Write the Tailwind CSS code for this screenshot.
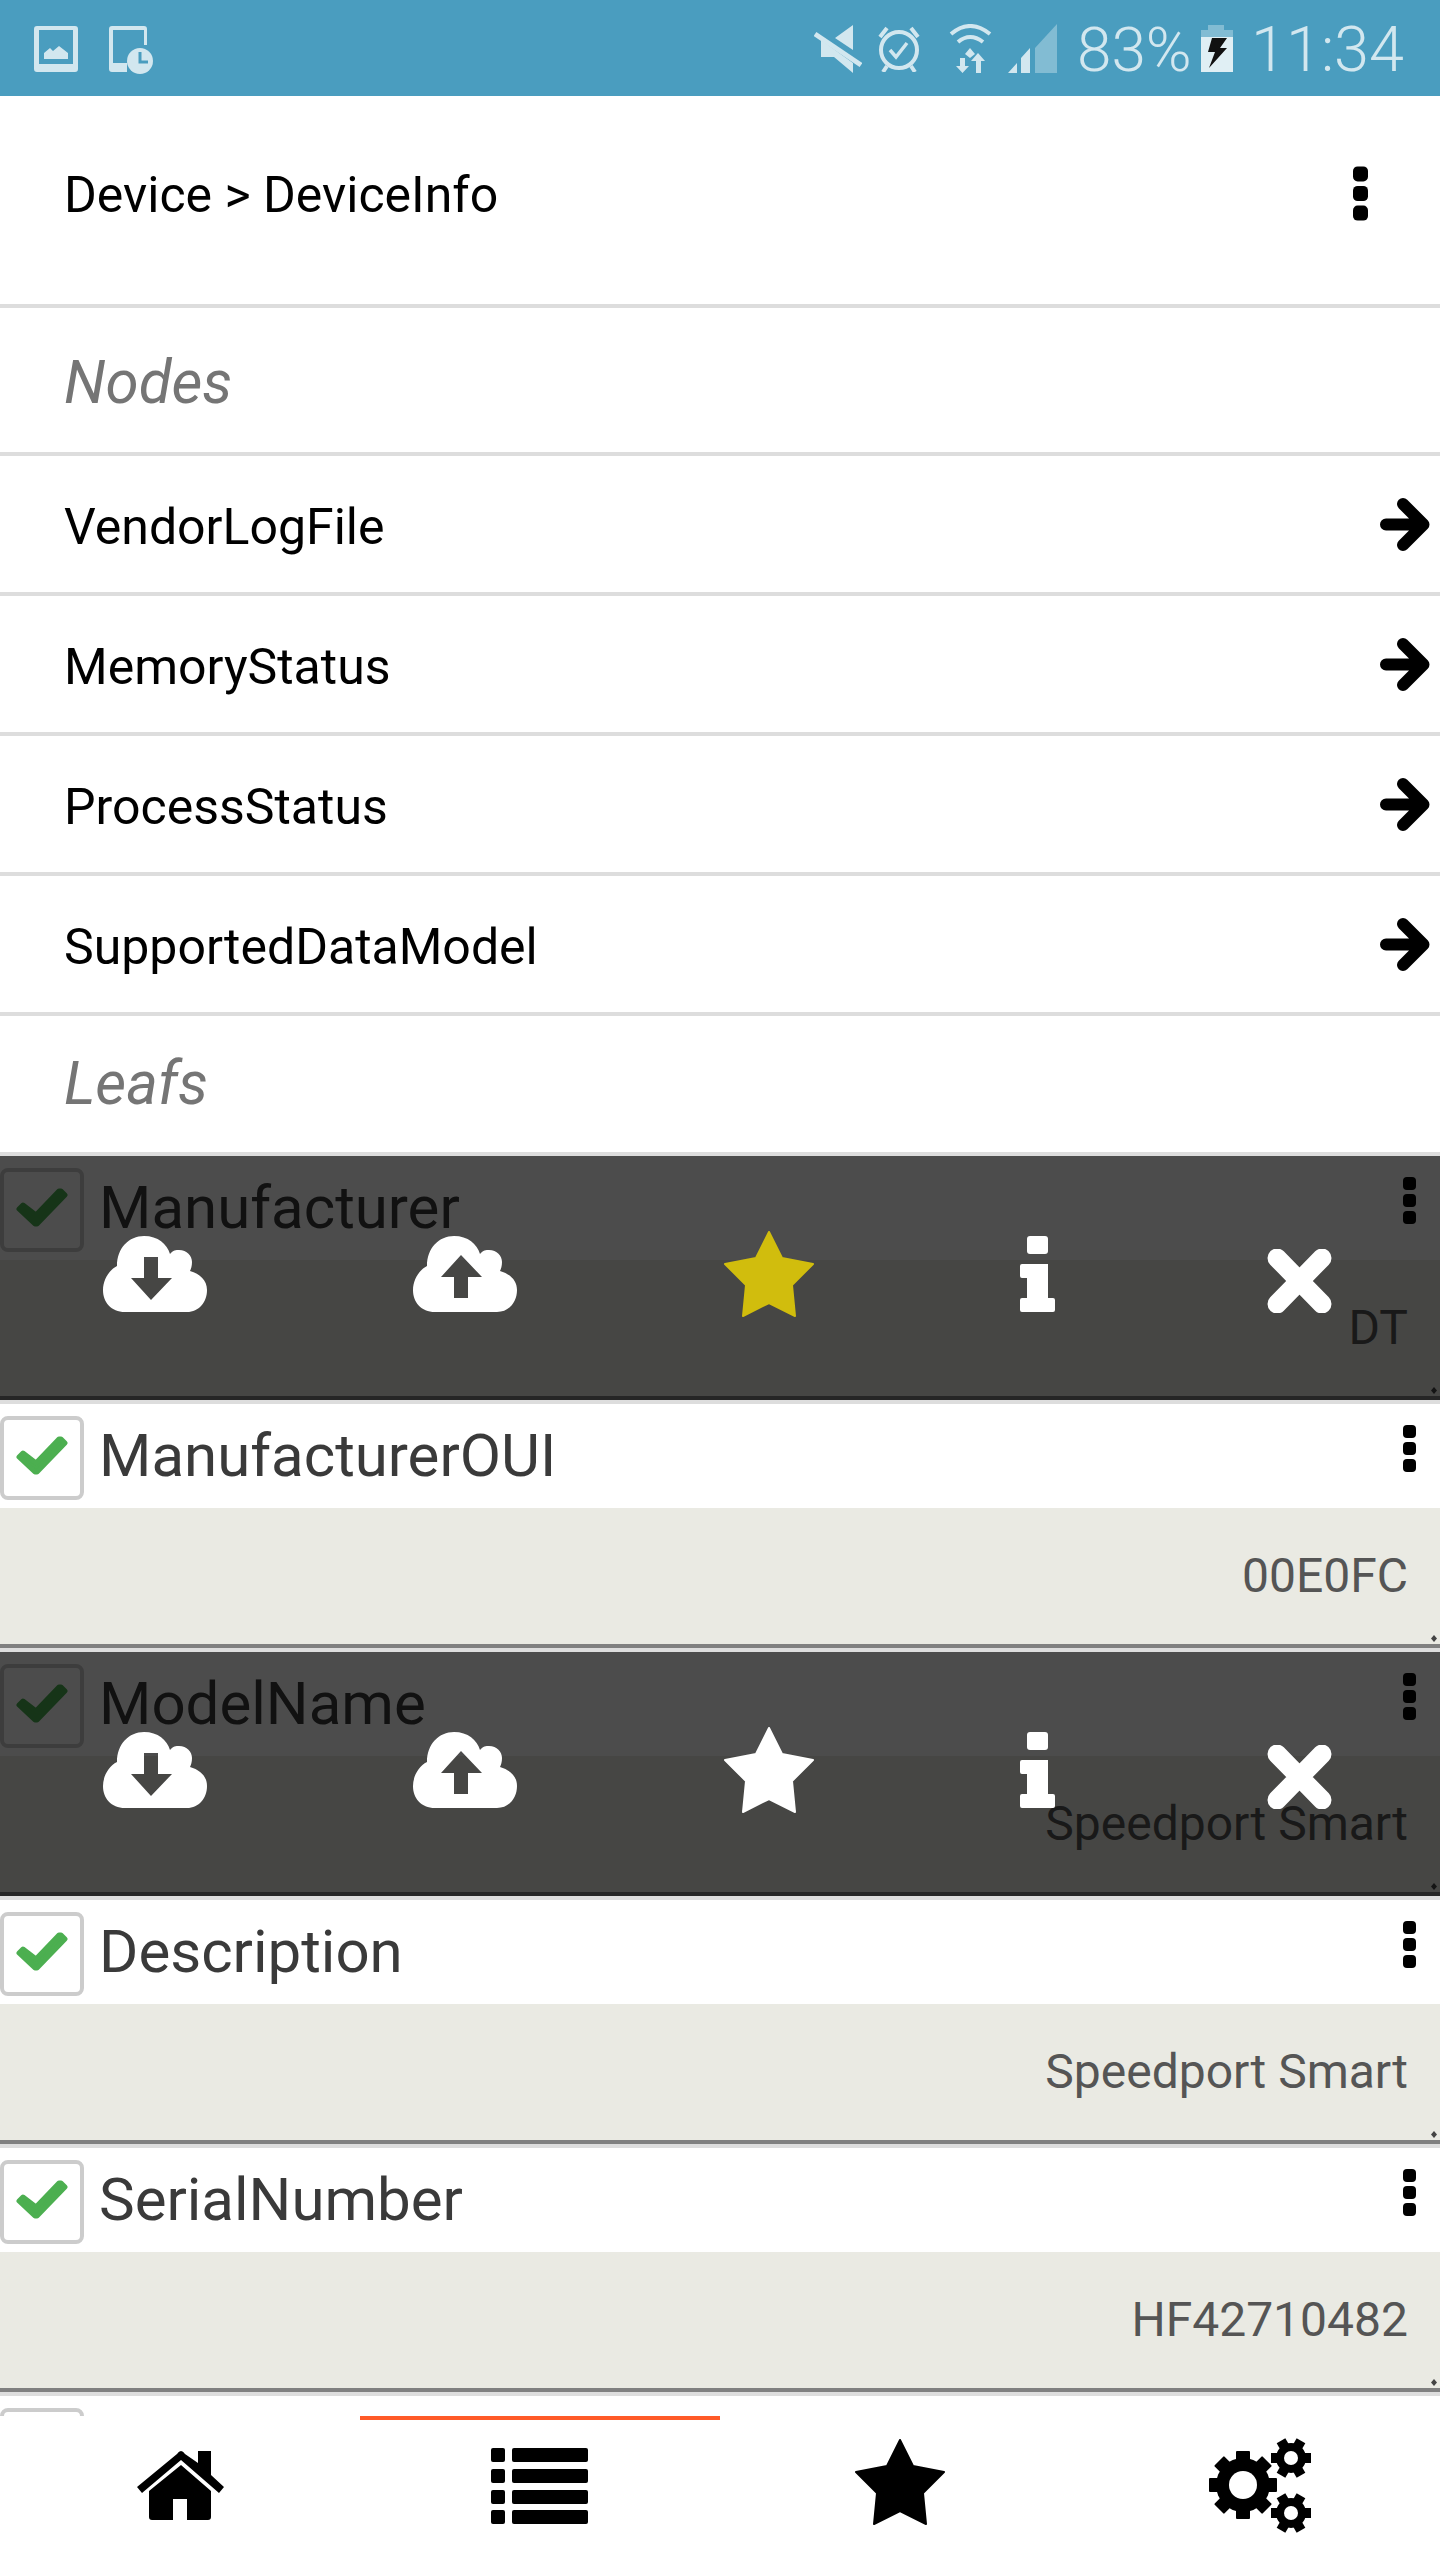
<!DOCTYPE html>
<html><head><meta charset="utf-8">
<script src="https://cdn.jsdelivr.net/npm/@tailwindcss/browser@4"></script>
</head>
<body class="font-['Roboto',sans-serif] bg-white">
<svg width="0" height="0" class="absolute">
<defs>
<symbol id="kebab" viewBox="0 0 13 47"><rect width="13" height="13" rx="4"/><rect y="17" width="13" height="13" rx="4"/><rect y="34" width="13" height="13" rx="4"/></symbol>
<symbol id="arrow" viewBox="0 0 50 53"><path d="M6 26.500H42M23 6L43.500 26.500L23 47" fill="none" stroke="#000" stroke-width="12" stroke-linecap="round" stroke-linejoin="round"/></symbol>
<symbol id="check" viewBox="0 0 52 39"><path d="M3 21L7 17L20 27L43 3L45 3L49 7L21 36L19 36Z" fill="currentColor" stroke="currentColor" stroke-width="5" stroke-linejoin="round"/></symbol>
<symbol id="star" viewBox="0 0 90 86"><path d="M45 1L58 27L89 33L68 54L71 85L45 72L19 85L22 54L1 33L32 27Z" stroke="currentColor" fill="currentColor" stroke-width="2" stroke-linejoin="round"/></symbol>
<symbol id="cdown" viewBox="0 0 104 76"><path fill="#fff" fill-rule="evenodd" d="M22 76C8 76 0 66 0 54C0 44 6 34 14 30C14 12 26 0 41 0C55 0 64 8 67 18C70 14 73 14 76 14C84 14 89 20 89 26C89 30 88 33 87 35C97 38 104 44 104 54C104 66 96 76 84 76ZM41 21V42H28L48 64L69 42H55V21Z"/></symbol>
<symbol id="cup" viewBox="0 0 104 76"><path fill="#fff" fill-rule="evenodd" d="M22 76C8 76 0 66 0 54C0 44 6 34 14 30C14 12 26 0 41 0C55 0 64 8 67 18C70 14 73 14 76 14C84 14 89 20 89 26C89 30 88 33 87 35C97 38 104 44 104 54C104 66 96 76 84 76ZM41 62V41H28L48 19L69 41H55V62Z"/></symbol>
<symbol id="info" viewBox="0 0 35 76"><g fill="#fff"><rect x="7" width="21" height="18" rx="3"/><path d="M2 28H28V62H33Q35 62 35 64V74Q35 76 33 76H2Q0 76 0 74V64Q0 62 2 62H7V42H2Q0 42 0 40V30Q0 28 2 28Z"/></g></symbol>
<symbol id="close" viewBox="0 0 65 64"><path d="M10 9L55 55M55 9L10 55" stroke="#fff" stroke-width="19" stroke-linecap="round"/></symbol>
<symbol id="gear8" viewBox="-36 -36 72 72"><g fill="#000"><circle r="27"/><rect x="-7" y="-34" width="14" height="68" rx="1"/><rect x="-7" y="-34" width="14" height="68" rx="1" transform="rotate(45)"/><rect x="-7" y="-34" width="14" height="68" rx="1" transform="rotate(90)"/><rect x="-7" y="-34" width="14" height="68" rx="1" transform="rotate(135)"/></g><circle r="14" fill="#fff"/></symbol>
<symbol id="gear6" viewBox="-22 -22 44 44"><g fill="#000"><circle r="15"/><rect x="-5" y="-20" width="10" height="40" transform="rotate(30)"/><rect x="-5" y="-20" width="10" height="40" transform="rotate(90)"/><rect x="-5" y="-20" width="10" height="40" transform="rotate(150)"/></g><circle r="7" fill="#fff"/></symbol>
</defs>
</svg>

<div class="relative w-[1440px] h-[2560px] overflow-hidden bg-white">

  <!-- status bar -->
  <div class="h-[96px] bg-[#4a9dbf] flex items-start text-[#d2e7ef]">
    <svg class="ml-[34px] mt-[26px]" width="44" height="46" viewBox="0 0 44 46"><path fill="currentColor" fill-rule="evenodd" d="M3 0H41Q44 0 44 3V43Q44 46 41 46H3Q0 46 0 43V3Q0 0 3 0ZM5 4V38H39V4ZM10 33V27L16 22L19 25L25 20L34 27V33Z"/></svg>
    <svg class="ml-[31px] mt-[26px]" width="44" height="48" viewBox="0 0 44 48"><path fill="currentColor" d="M3 0H35Q38 0 38 3V19H35V4H4V37H18V46H3Q0 46 0 43V3Q0 0 3 0Z"/><circle cx="31" cy="35" r="13" fill="currentColor"/><path d="M31 26V36H39" fill="none" stroke="#4a9dbf" stroke-width="3"/></svg>
    <svg class="ml-[661px] mt-[25px]" width="48" height="48" viewBox="0 0 48 48"><path fill="currentColor" d="M39 0V25L21 13ZM7 15L39 38V48L20 32H7Z"/><path d="M1 9L47 40" stroke="currentColor" stroke-width="5"/></svg>
    <svg class="ml-[15px] mt-[25px]" width="44" height="47" viewBox="0 0 44 47"><g fill="none" stroke="currentColor"><ellipse cx="22" cy="25" rx="18" ry="18" stroke-width="4"/><path d="M13 25L19 32L30 18" stroke-width="3.500"/><path d="M3 12L10 3M41 12L34 3M10 41L6 47M34 41L38 47" stroke-width="4"/></g></svg>
    <svg class="ml-[28px] mt-[24px]" width="43" height="49" viewBox="0 0 43 49"><g fill="none" stroke="currentColor" stroke-width="4"><path d="M2 10Q21 -6 41 10"/><path d="M9 18Q21 8 34 18"/></g><path fill="currentColor" d="M21 24L26 30L21 34L16 30ZM11 34H16V42H20L13.500 49L7 42H11ZM27 49V37H22L29 29L36 37H32V49Z"/></svg>
    <svg class="ml-[16px] mt-[24px]" width="49" height="49" viewBox="0 0 49 49"><path fill="#82bcd3" d="M27 24L49 0V49H27Z"/><path fill="currentColor" d="M0 49L9 39V49ZM13 49V34L22 24V49Z"/></svg>
    <span class="ml-[20px] mt-[15px] text-[62px] leading-[70px] font-light w-[110px] whitespace-nowrap">83%</span>
    <svg class="ml-[14px] mt-[25px]" width="32" height="47" viewBox="0 0 32 47"><path fill="#82bcd3" d="M7 0H23V5H32V12H0V5H7Z"/><path fill="#e0eff4" d="M0 12H32V47H0Z"/><path fill="#111" d="M11 13H26L19 23H26L8 43L14 27H7Z"/></svg>
    <span class="ml-[18px] mt-[15px] text-[63px] leading-[70px] font-light whitespace-nowrap">11:34</span>
  </div>

  <!-- header -->
  <div class="h-[208px] flex items-start pl-[64px] pt-[74px] pr-[72px] justify-between">
    <span class="text-[50px] leading-[50px] text-black whitespace-nowrap">Device &gt; DeviceInfo</span>
    <svg class="mt-[-5px] text-black" width="15" height="57"><use href="#kebab"/></svg>
  </div>
  <div class="h-[4px] bg-[#ddd]"></div>

  <!-- nodes -->
  <div class="h-[144px] flex items-center pl-[64px] text-[60px] italic text-[#757575] pt-[6px]">Nodes</div>
  <div class="h-[4px] bg-[#ddd]"></div>
  <div class="h-[136px] flex items-center justify-between pl-[64px] pr-[10px] text-[50px] text-black"><span class="mt-[6px]">VendorLogFile</span><svg width="50" height="53"><use href="#arrow"/></svg></div>
  <div class="h-[4px] bg-[#ddd]"></div>
  <div class="h-[136px] flex items-center justify-between pl-[64px] pr-[10px] text-[50px] text-black"><span class="mt-[6px]">MemoryStatus</span><svg width="50" height="53"><use href="#arrow"/></svg></div>
  <div class="h-[4px] bg-[#ddd]"></div>
  <div class="h-[136px] flex items-center justify-between pl-[64px] pr-[10px] text-[50px] text-black"><span class="mt-[6px]">ProcessStatus</span><svg width="50" height="53"><use href="#arrow"/></svg></div>
  <div class="h-[4px] bg-[#ddd]"></div>
  <div class="h-[136px] flex items-center justify-between pl-[64px] pr-[10px] text-[50px] text-black"><span class="mt-[6px]">SupportedDataModel</span><svg width="50" height="53"><use href="#arrow"/></svg></div>
  <div class="h-[4px] bg-[#ddd]"></div>
  <div class="h-[136px] flex items-center pl-[64px] text-[60px] italic text-[#757575]">Leafs</div>
  <div class="h-[4px] bg-[#ddd]"></div>

  <!-- Manufacturer -->
  <div class="relative h-[248px]">
    <div class="h-[104px] flex items-start justify-between pr-[24px]">
      <div class="flex">
        <div class="mt-[12px] w-[84px] h-[84px] border-4 border-[#ccc] rounded-lg pl-[12px] pt-[16px] text-[#4caf50]"><svg width="52" height="39"><use href="#check"/></svg></div>
        <span class="ml-[15px] mt-[17px] text-[60px] leading-[70px] text-[#3a3a3a] whitespace-nowrap">Manufacturer</span>
      </div>
      <svg class="mt-[21px]" width="13" height="47"><use href="#kebab"/></svg>
    </div>
    <div class="relative h-[136px] bg-[#eaeae3] text-right pr-[32px] pt-[43px] text-[48px] leading-[50px] text-[#555]">DT<svg class="absolute right-[3px] bottom-[2px]" width="6" height="7" viewBox="0 0 6 7"><path d="M3 0L6 3.500L3 7L0 3.500Z" fill="#444"/></svg></div>
    <div class="h-[4px] bg-[#808080]"></div>
    <div class="h-[4px] bg-[#ddd]"></div>
    <div class="absolute top-0 inset-x-0 h-[244px] bg-black/70 flex items-start">
      <svg class="ml-[103px] mt-[80px]" width="104" height="76"><use href="#cdown"/></svg>
      <svg class="ml-[206px] mt-[80px]" width="104" height="76"><use href="#cup"/></svg>
      <svg class="ml-[207px] mt-[75px] text-[#d1bd0d]" width="90" height="86"><use href="#star"/></svg>
      <svg class="ml-[206px] mt-[80px]" width="35" height="76"><use href="#info"/></svg>
      <svg class="ml-[212px] mt-[93px]" width="65" height="64"><use href="#close"/></svg>
    </div>
  </div>

  <!-- ManufacturerOUI -->
  <div class="relative h-[248px]">
    <div class="h-[104px] flex items-start justify-between pr-[24px]">
      <div class="flex">
        <div class="mt-[12px] w-[84px] h-[84px] border-4 border-[#ccc] rounded-lg pl-[12px] pt-[16px] text-[#4caf50]"><svg width="52" height="39"><use href="#check"/></svg></div>
        <span class="ml-[15px] mt-[17px] text-[60px] leading-[70px] text-[#3a3a3a] whitespace-nowrap">ManufacturerOUI</span>
      </div>
      <svg class="mt-[21px]" width="13" height="47"><use href="#kebab"/></svg>
    </div>
    <div class="relative h-[136px] bg-[#eaeae3] text-right pr-[32px] pt-[43px] text-[48px] leading-[50px] text-[#555]">00E0FC<svg class="absolute right-[3px] bottom-[2px]" width="6" height="7" viewBox="0 0 6 7"><path d="M3 0L6 3.500L3 7L0 3.500Z" fill="#444"/></svg></div>
    <div class="h-[4px] bg-[#808080]"></div>
    <div class="h-[4px] bg-[#ddd]"></div>
  </div>

  <!-- ModelName -->
  <div class="relative h-[248px]">
    <div class="h-[104px] flex items-start justify-between pr-[24px]">
      <div class="flex">
        <div class="mt-[12px] w-[84px] h-[84px] border-4 border-[#ccc] rounded-lg pl-[12px] pt-[16px] text-[#4caf50]"><svg width="52" height="39"><use href="#check"/></svg></div>
        <span class="ml-[15px] mt-[17px] text-[60px] leading-[70px] text-[#3a3a3a] whitespace-nowrap">ModelName</span>
      </div>
      <svg class="mt-[21px]" width="13" height="47"><use href="#kebab"/></svg>
    </div>
    <div class="relative h-[136px] bg-[#eaeae3] text-right pr-[32px] pt-[43px] text-[48px] leading-[50px] text-[#555]">Speedport Smart<svg class="absolute right-[3px] bottom-[2px]" width="6" height="7" viewBox="0 0 6 7"><path d="M3 0L6 3.500L3 7L0 3.500Z" fill="#444"/></svg></div>
    <div class="h-[4px] bg-[#808080]"></div>
    <div class="h-[4px] bg-[#ddd]"></div>
    <div class="absolute top-0 inset-x-0 h-[244px] bg-black/70 flex items-start">
      <svg class="ml-[103px] mt-[80px]" width="104" height="76"><use href="#cdown"/></svg>
      <svg class="ml-[206px] mt-[80px]" width="104" height="76"><use href="#cup"/></svg>
      <svg class="ml-[207px] mt-[75px] text-white" width="90" height="86"><use href="#star"/></svg>
      <svg class="ml-[206px] mt-[80px]" width="35" height="76"><use href="#info"/></svg>
      <svg class="ml-[212px] mt-[93px]" width="65" height="64"><use href="#close"/></svg>
    </div>
  </div>

  <!-- Description -->
  <div class="relative h-[248px]">
    <div class="h-[104px] flex items-start justify-between pr-[24px]">
      <div class="flex">
        <div class="mt-[12px] w-[84px] h-[84px] border-4 border-[#ccc] rounded-lg pl-[12px] pt-[16px] text-[#4caf50]"><svg width="52" height="39"><use href="#check"/></svg></div>
        <span class="ml-[15px] mt-[17px] text-[60px] leading-[70px] text-[#3a3a3a] whitespace-nowrap">Description</span>
      </div>
      <svg class="mt-[21px]" width="13" height="47"><use href="#kebab"/></svg>
    </div>
    <div class="relative h-[136px] bg-[#eaeae3] text-right pr-[32px] pt-[43px] text-[48px] leading-[50px] text-[#555]">Speedport Smart<svg class="absolute right-[3px] bottom-[2px]" width="6" height="7" viewBox="0 0 6 7"><path d="M3 0L6 3.500L3 7L0 3.500Z" fill="#444"/></svg></div>
    <div class="h-[4px] bg-[#808080]"></div>
    <div class="h-[4px] bg-[#ddd]"></div>
  </div>

  <!-- SerialNumber -->
  <div class="relative h-[248px]">
    <div class="h-[104px] flex items-start justify-between pr-[24px]">
      <div class="flex">
        <div class="mt-[12px] w-[84px] h-[84px] border-4 border-[#ccc] rounded-lg pl-[12px] pt-[16px] text-[#4caf50]"><svg width="52" height="39"><use href="#check"/></svg></div>
        <span class="ml-[15px] mt-[17px] text-[60px] leading-[70px] text-[#3a3a3a] whitespace-nowrap">SerialNumber</span>
      </div>
      <svg class="mt-[21px]" width="13" height="47"><use href="#kebab"/></svg>
    </div>
    <div class="relative h-[136px] bg-[#eaeae3] text-right pr-[32px] pt-[43px] text-[48px] leading-[50px] text-[#555]">HF42710482<svg class="absolute right-[3px] bottom-[2px]" width="6" height="7" viewBox="0 0 6 7"><path d="M3 0L6 3.500L3 7L0 3.500Z" fill="#444"/></svg></div>
    <div class="h-[4px] bg-[#808080]"></div>
    <div class="h-[4px] bg-[#ddd]"></div>
  </div>

  <!-- partially hidden next item -->
  <div class="h-[104px] pt-[12px]"><div class="w-[84px] h-[84px] border-4 border-[#ccc] rounded-lg"></div></div>

  <!-- bottom nav -->
  <div class="absolute bottom-0 inset-x-0 h-[144px] bg-white grid grid-cols-4">
    <div class="flex justify-center items-start pt-[35px]">
      <svg width="87" height="69" viewBox="0 0 87 69"><path d="M44 0Q42 0 40 3L0 36L5 42L44 9L82 42L87 36L74 24V0H61V12L48 3Q46 0 44 0Z"/><path d="M44 14L12 40V66Q12 69 15 69H36V48H50V69H71Q74 69 74 66V40Z"/></svg>
    </div>
    <div class="flex justify-center items-start pt-[28px] border-t-4 border-[#ff5a28]">
      <svg width="98" height="76" viewBox="0 0 98 76"><rect y="0" width="14" height="14" rx="2"/><rect x="21" y="0" width="76" height="14" rx="2"/><rect y="21" width="14" height="14" rx="2"/><rect x="21" y="21" width="76" height="14" rx="2"/><rect y="42" width="14" height="14" rx="2"/><rect x="21" y="42" width="76" height="14" rx="2"/><rect y="62" width="14" height="14" rx="2"/><rect x="21" y="62" width="76" height="14" rx="2"/></svg>
    </div>
    <div class="flex justify-center items-start pt-[23px]">
      <svg class="text-black" width="90" height="86"><use href="#star"/></svg>
    </div>
    <div class="relative">
      <svg class="absolute left-[128px] top-[22px]" width="103" height="95" viewBox="0 0 103 95">
        <use href="#gear8" x="-1" y="11" width="72" height="72"/>
        <use href="#gear6" x="61" y="-2" width="44" height="44"/>
        <use href="#gear6" x="61" y="53" width="44" height="44"/>
      </svg>
    </div>
  </div>
</div>
</body></html>
